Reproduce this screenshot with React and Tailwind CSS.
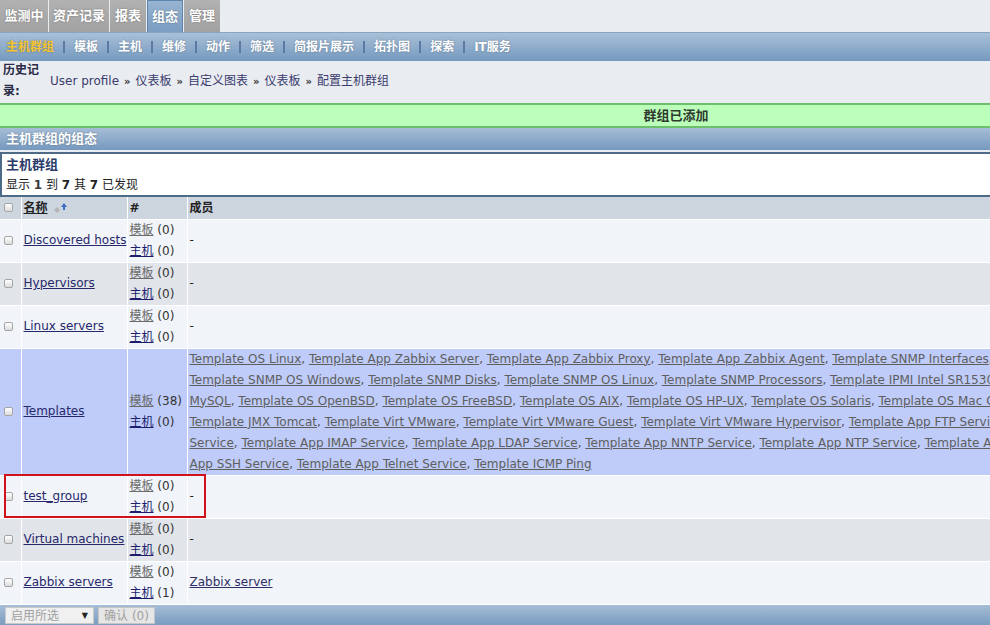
import React from 'react'

const font = { fontFamily: '"DejaVu Sans", "Noto Sans CJK SC", sans-serif' }

const tabs = [
  { label: '监测中', w: 'w-[48px]' },
  { label: '资产记录', w: 'w-[60px]' },
  { label: '报表', w: 'w-[36px]' },
  { label: '组态', w: 'w-[36px]', active: true },
  { label: '管理', w: 'w-[36px]' },
]

const subnav = ['主机群组', '模板', '主机', '维修', '动作', '筛选', '简报片展示', '拓扑图', '探索', 'IT服务']

const templateLines = [
  ['Template OS Linux', 'Template App Zabbix Server', 'Template App Zabbix Proxy', 'Template App Zabbix Agent', 'Template SNMP Interfaces', 'Template SNMP Device'],
  ['Template SNMP OS Windows', 'Template SNMP Disks', 'Template SNMP OS Linux', 'Template SNMP Processors', 'Template IPMI Intel SR1530', 'Template IPMI Intel SR1630'],
  ['MySQL', 'Template OS OpenBSD', 'Template OS FreeBSD', 'Template OS AIX', 'Template OS HP-UX', 'Template OS Solaris', 'Template OS Mac OS X', 'Template JMX Generic'],
  ['Template JMX Tomcat', 'Template Virt VMware', 'Template Virt VMware Guest', 'Template Virt VMware Hypervisor', 'Template App FTP Service', 'Template App HTTP'],
  ['Service', 'Template App IMAP Service', 'Template App LDAP Service', 'Template App NNTP Service', 'Template App NTP Service', 'Template App POP Service'],
  ['App SSH Service', 'Template App Telnet Service', 'Template ICMP Ping'],
]

const rows = [
  { name: 'Discovered hosts', tpl: 0, hosts: 0 },
  { name: 'Hypervisors', tpl: 0, hosts: 0 },
  { name: 'Linux servers', tpl: 0, hosts: 0 },
  { name: 'Templates', tpl: 38, hosts: 0, templates: true },
  { name: 'test_group', tpl: 0, hosts: 0, marked: true },
  { name: 'Virtual machines', tpl: 0, hosts: 0 },
  { name: 'Zabbix servers', tpl: 0, hosts: 1, members: 'Zabbix server' },
]

const Checkbox = () => (
  <div className="w-[9px] h-[9px] rounded-[2px] border border-[#a5a5a5] bg-gradient-to-b from-[#ffffff] to-[#dcdcdc]" />
)

const SortIcon = () => (
  <svg width="16" height="12" viewBox="0 0 16 12" className="ml-[5px]">
    <path d="M4 5 L7 8 L4 11 L1 8 Z" fill="#b4b4b4" />
    <path d="M11 1 L14 5 L12 5 L12 8 L10 8 L10 5 L8 5 Z" fill="#3c6fc4" />
  </svg>
)

const Sep = () => <span className="text-[10px] font-bold text-[#333]">»</span>

export default function App() {
  return (
    <div className="w-[990px] h-[625px] overflow-hidden bg-[#e9edf1] text-[12px] text-[#222]" style={font}>
      {/* top tabs */}
      <div className="flex h-[33px] border-b border-[#8aa4bf]">
        {tabs.map((t) => (
          <div
            key={t.label}
            className={`${t.w} mr-[1px] flex items-center justify-center text-[13px] font-bold text-white [text-shadow:0_0_2px_rgba(0,0,0,0.35)] ${
              t.active
                ? 'bg-gradient-to-b from-[#97b4d1] to-[#7b9dc1] border border-[#5f85ad] border-b-0'
                : 'bg-gradient-to-b from-[#b2b2b2] to-[#a2a2a2]'
            }`}
          >
            {t.label}
          </div>
        ))}
      </div>

      {/* sub navigation */}
      <div className="flex items-center h-[28px] pl-[6px] bg-gradient-to-b from-[#a9c0d8] to-[#7599be]">
        {subnav.map((s, i) => (
          <div key={s} className="flex items-center">
            {i > 0 && <span className="mx-[9px] w-[2px] h-[12px] bg-[#5b7aa2]" />}
            <span
              className={`text-[12px] font-bold [text-shadow:0_0_2px_rgba(0,0,0,0.3)] ${
                i === 0 ? 'text-[#f4c52e]' : 'text-white'
              }`}
            >
              {s}
            </span>
          </div>
        ))}
      </div>

      {/* breadcrumb */}
      <div className="flex items-center h-[40px] pl-[3px]">
        <div className="w-[42px] font-bold text-[#2a2a48] leading-[21px] text-[12px]">历史记录:</div>
        <div className="ml-[5px] flex items-center gap-[5px] text-[#3b3b6d]">
          <span>User profile</span>
          <Sep />
          <span>仪表板</span>
          <Sep />
          <span>自定义图表</span>
          <Sep />
          <span>仪表板</span>
          <Sep />
          <span>配置主机群组</span>
        </div>
      </div>

      {/* success message */}
      <div className="mt-[2px] h-[25px] flex items-center justify-center bg-[#bbffbb] border-y-2 border-[#6cc06c] font-bold text-[#2f3a2f] text-[13px] pl-[362px]">
        群组已添加
      </div>

      {/* section header */}
      <div className="h-[22px] flex items-center pl-[6px] bg-gradient-to-b from-[#a6bdd6] to-[#7599be] text-white font-bold text-[13px] [text-shadow:0_0_2px_rgba(0,0,0,0.3)]">
        主机群组的组态
      </div>

      {/* info box */}
      <div className="mt-[2px] bg-white border-y-2 border-[#4d6b86] border-l-2 pl-[4px] h-[45px] flex flex-col justify-center">
        <div className="font-bold text-[#2b3b6a] text-[13px] leading-[21px]">主机群组</div>
        <div className="leading-[21px] text-[#222]">
          显示 <b className="text-[#3a3a3a]">1</b> 到 <b>7</b> 其 <b>7</b> 已发现
        </div>
      </div>

      {/* table */}
      <div className="relative">
        <table className="table-fixed border-collapse w-[1400px]">
          <colgroup>
            <col className="w-[21px]" />
            <col className="w-[106px]" />
            <col className="w-[60px]" />
            <col className="w-[1213px]" />
          </colgroup>
          <thead>
            <tr className="bg-[#cdd5de] h-[22px]">
              <td className="border-r border-b border-white pl-[4px]">
                <Checkbox />
              </td>
              <td className="border-r border-b border-white pl-[2px]">
                <div className="flex items-center">
                  <span className="font-bold underline text-[#222]">名称</span>
                  <SortIcon />
                </div>
              </td>
              <td className="border-r border-b border-white pl-[2px] font-bold">#</td>
              <td className="border-b border-white pl-[2px] font-bold">成员</td>
            </tr>
          </thead>
          <tbody>
            {rows.map((r, i) => {
              const bg = r.templates ? 'bg-[#bfccf9]' : i % 2 === 0 ? 'bg-[#f1f5f9]' : 'bg-[#e1e5ea]'
              return (
                <tr key={r.name} className={`${bg} leading-[21px]`}>
                  <td className="border-r border-b border-white pl-[4px] align-middle">
                    <Checkbox />
                  </td>
                  <td className="border-r border-b border-white pl-[2px] align-middle">
                    <span className="underline text-[#27276b] whitespace-nowrap">{r.name}</span>
                  </td>
                  <td className="border-r border-b border-white pl-[2px] align-middle whitespace-nowrap">
                    <div>
                      <span className="underline text-[#6a6a6a]">模板</span> <span className="text-[#333]">({r.tpl})</span>
                    </div>
                    <div>
                      <span className="underline text-[#1d1d6e]">主机</span> <span className="text-[#333]">({r.hosts})</span>
                    </div>
                  </td>
                  <td className="border-b border-white pl-[2px] align-middle whitespace-nowrap">
                    {r.templates ? (
                      templateLines.map((line, li) => (
                        <div key={li}>
                          {line.map((t, ti) => (
                            <React.Fragment key={ti}>
                              {ti > 0 && <span className="text-[#555]">, </span>}
                              <span className="underline text-[#5e5e5e]">{t}</span>
                            </React.Fragment>
                          ))}
                          {li < 4 && <span className="text-[#555]">, </span>}
                        </div>
                      ))
                    ) : r.members ? (
                      <span className="underline text-[#2f2f68]">{r.members}</span>
                    ) : (
                      <span>-</span>
                    )}
                  </td>
                </tr>
              )
            })}
          </tbody>
        </table>
        {/* highlight box */}
        <div className="absolute left-[4px] top-[277px] w-[202px] h-[44px] border-2 border-[#d0131b] pointer-events-none" />
      </div>

      {/* footer actions */}
      <div className="h-[22px] flex items-center pl-[5px] gap-[4px] bg-gradient-to-b from-[#a6bdd6] to-[#7599be]">
        <div className="w-[89px] h-[17px] bg-[#f0f0f0] border border-[#c9c9c9] flex items-center justify-between px-[5px] text-[#a0a0a0]">
          <span>启用所选</span>
          <span className="text-[8px] text-[#222]">▼</span>
        </div>
        <div className="w-[57px] h-[17px] bg-[#e6e6e6] border border-[#c5c5c5] flex items-center justify-center text-[#a0a0a0]">
          确认 (0)
        </div>
      </div>
    </div>
  )
}
